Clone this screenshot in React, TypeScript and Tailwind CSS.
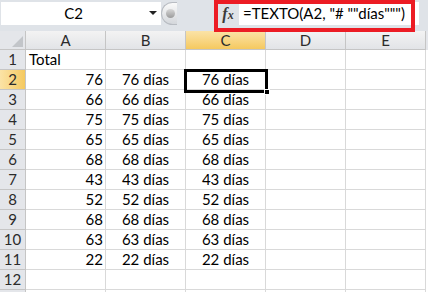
const cols = ['A', 'B', 'C', 'D', 'E']
const values = [76, 66, 75, 65, 68, 43, 52, 68, 63, 22]

const font = { fontFamily: 'Lato, "Open Sans", sans-serif' }

function ColHeader({ label, active }: { label: string; active?: boolean }) {
  return (
    <div
      className={`flex h-[19px] w-[80px] items-center justify-center border-r border-b border-[#c5c5c5] text-[15px] ${
        active
          ? 'bg-gradient-to-b from-[#fbe3a6] to-[#f5c95e] text-[#2b2b2b]'
          : 'bg-gradient-to-b from-[#f3f3f3] to-[#e2e4e7] text-[#2b2b2b]'
      }`}
    >
      {label}
    </div>
  )
}

function RowHeader({ n, active }: { n?: number; active?: boolean }) {
  return (
    <div
      className={`flex h-[20px] w-[26px] items-center justify-center border-r border-b border-[#c5c5c5] text-[15px] ${
        active
          ? 'bg-gradient-to-r from-[#fbe3a6] to-[#f5c95e] text-[#2b2b2b]'
          : 'bg-[#e4e6ea] text-[#2b2b2b]'
      }`}
    >
      {n}
    </div>
  )
}

function Cell({
  children,
  align = 'center',
}: {
  children?: React.ReactNode
  align?: 'left' | 'right' | 'center'
}) {
  const a =
    align === 'right' ? 'justify-end pr-[2px]' : align === 'left' ? 'justify-start pl-[3px]' : 'justify-center'
  return (
    <div
      className={`flex h-[20px] w-[80px] items-center border-r border-b border-[#d9d9d9] bg-white text-[15px] text-black ${a}`}
    >
      {children}
    </div>
  )
}

export default function App() {
  return (
    <div className="relative h-[292px] w-[428px] overflow-hidden bg-white" style={font}>
      {/* barra de fórmulas */}
      <div className="flex h-[31px] bg-[#dfe3e8] pt-[2px] pb-[6px]">
        <div className="relative ml-[1px] flex h-[23px] w-[160px] items-center justify-center bg-white text-[15px] text-black">
          <span className="-ml-[15px]">C2</span>
          <span className="absolute right-[4px] top-[9px] h-0 w-0 border-x-[4px] border-t-[4px] border-x-transparent border-t-[#222]" />
        </div>
        <div className="flex h-[23px] w-[16px] items-center rounded-l-full border border-r-0 border-[#b8bcc2] bg-gradient-to-b from-[#fafafa] to-[#d4d7db] pl-[4px]">
          <span className="h-[9px] w-[9px] rounded-full bg-gradient-to-b from-[#d8d8d8] to-[#9b9b9b]" />
        </div>
        <div className="w-[41px]" />
        <div
          className="h-[23px] w-[20px] pt-[2px] text-center text-[16px] font-bold italic leading-[20px] text-[#3a3a3a]"
          style={{ fontFamily: '"Liberation Serif", serif' }}
        >
          f<span className="text-[12px]">x</span>
        </div>
        <div className="ml-[1px] flex h-[23px] w-[180px] items-center bg-white pl-[4px] text-[15px] text-black">
          =TEXTO(A2, "# ""días""")
        </div>
      </div>

      {/* recuadro rojo */}
      <div className="absolute left-[214px] top-0 h-[32px] w-[201px] border-[4px] border-[#ec1c24]" />

      {/* cabecera de columnas */}
      <div className="flex">
        <div className="relative h-[19px] w-[26px] border-r border-b border-[#c5c5c5] bg-[#e4e6ea]">
          <svg className="absolute right-[2px] bottom-[2px]" width="11" height="11" viewBox="0 0 11 11">
            <polygon points="11,0 11,11 0,11" fill="#c2c5c9" />
          </svg>
        </div>
        {cols.map((c) => (
          <ColHeader key={c} label={c} active={c === 'C'} />
        ))}
        <div className="h-[19px] flex-1 bg-[#e4e6ea]" />
      </div>

      {/* filas */}
      <div className="flex">
        <RowHeader n={1} />
        <Cell align="left">Total</Cell>
        <Cell />
        <Cell />
        <Cell />
        <Cell />
      </div>
      {values.map((v, i) => (
        <div key={i} className="flex">
          <RowHeader n={i + 2} active={i === 0} />
          <Cell align="right">{v}</Cell>
          <Cell>{v} días</Cell>
          <Cell>{v} días</Cell>
          <Cell />
          <Cell />
        </div>
      ))}
      <div className="flex">
        <RowHeader n={12} />
        <Cell />
        <Cell />
        <Cell />
        <Cell />
        <Cell />
      </div>
      <div className="flex">
        <RowHeader />
        <Cell />
        <Cell />
        <Cell />
        <Cell />
        <Cell />
      </div>

      {/* celda activa C2 */}
      <div className="absolute left-[184px] top-[69px] h-[24px] w-[84px] border-[3px] border-black">
        <span className="absolute -right-[5px] -bottom-[5px] h-[6px] w-[6px] border border-white bg-black" />
      </div>
    </div>
  )
}
